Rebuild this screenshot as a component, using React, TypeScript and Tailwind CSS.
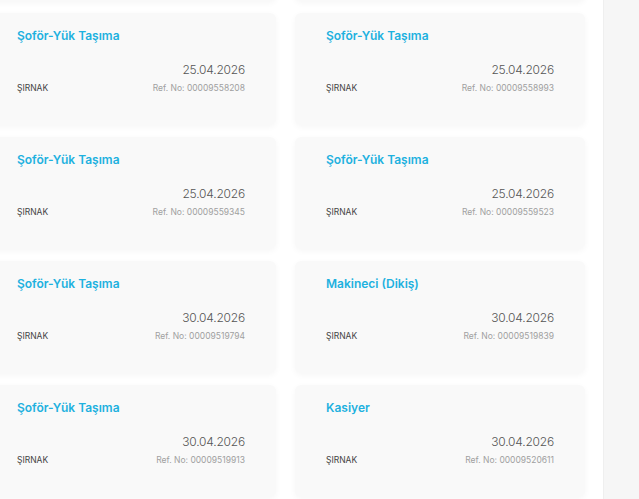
type Job = { title: string; date: string; city: string; ref: string };

const JOBS: Job[] = [
  { title: "Şoför-Yük Taşıma", date: "25.04.2026", city: "ŞIRNAK", ref: "00009558208" },
  { title: "Şoför-Yük Taşıma", date: "25.04.2026", city: "ŞIRNAK", ref: "00009558993" },
  { title: "Şoför-Yük Taşıma", date: "25.04.2026", city: "ŞIRNAK", ref: "00009559345" },
  { title: "Şoför-Yük Taşıma", date: "25.04.2026", city: "ŞIRNAK", ref: "00009559523" },
  { title: "Şoför-Yük Taşıma", date: "30.04.2026", city: "ŞIRNAK", ref: "00009519794" },
  { title: "Makineci (Dikiş)", date: "30.04.2026", city: "ŞIRNAK", ref: "00009519839" },
  { title: "Şoför-Yük Taşıma", date: "30.04.2026", city: "ŞIRNAK", ref: "00009519913" },
  { title: "Kasiyer", date: "30.04.2026", city: "ŞIRNAK", ref: "00009520611" },
];

const card = "h-[112px] rounded-md bg-[#f9f9f9] shadow-[0_2px_6px_rgba(0,0,0,0.04)]";

function JobCard({ job }: { job: Job }) {
  return (
    <div className={`${card} pl-[31px] pr-[31px] pt-[14px] flex flex-col`}>
      <div className="text-[12px] leading-[18px] font-semibold text-[#1eb1df]">{job.title}</div>
      <div className="mt-[16px] flex items-end justify-between">
        <span className="text-[8.5px] leading-[14px] text-[#444] pb-[2px]">{job.city}</span>
        <div className="flex flex-col items-end">
          <span className="text-[12px] leading-[18px] font-light tracking-[-0.2px] text-[#555]">{job.date}</span>
          <span className="text-[8.5px] leading-[18px] text-[#a0a0a0]">Ref. No: {job.ref}</span>
        </div>
      </div>
    </div>
  );
}

export default function App() {
  return (
    <div className="h-[499px] w-[639px] flex overflow-hidden bg-white" style={{ fontFamily: "Inter, 'Open Sans', sans-serif" }}>
      <div className="flex-1 overflow-hidden">
        <div className="grid grid-cols-[290px_290px] gap-x-[19px] gap-y-[12px] ml-[-14px] mt-[-111px]">
          {/* previous row, scrolled out of view */}
          <div className={card} />
          <div className={card} />
          {JOBS.map((j) => (
            <JobCard key={j.ref} job={j} />
          ))}
        </div>
      </div>
      <div className="w-[36px] bg-[#f6f6f6] border-l border-[#efefef]" />
    </div>
  );
}
